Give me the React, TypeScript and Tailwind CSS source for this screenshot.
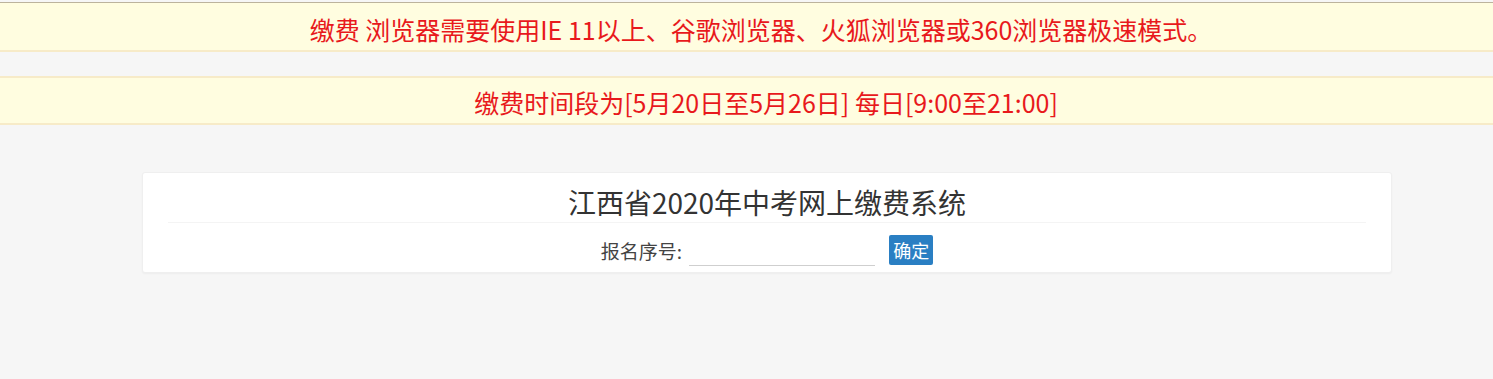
import React from "react";

export default function App() {
  return (
    <div
      className="min-h-[379px] bg-[#f6f6f6] pt-[2px]"
      style={{ fontFamily: '"Noto Sans CJK SC", "Noto Sans", sans-serif' }}
    >
      <div className="box-border flex h-[50px] items-center justify-center border-t border-b-2 border-t-[#bcb39d] border-b-[#f7ebc8] bg-[#fffde0] pl-[29px] pt-[6px] text-[25px] leading-none text-[#e8191c]">
        缴费 浏览器需要使用IE 11以上、谷歌浏览器、火狐浏览器或360浏览器极速模式。
      </div>
      <div className="mt-[24px] box-border flex h-[49px] items-center justify-center border-y-2 border-[#f7ebc8] bg-[#fffde0] pl-[39px] pt-[4px] text-[25px] leading-none text-[#e8191c]">
        缴费时间段为[5月20日至5月26日] 每日[9:00至21:00]
      </div>
      <div className="ml-[142px] mt-[47px] box-border h-[101px] w-[1250px] rounded-[3px] border border-[#efefef] bg-white pt-[9px] shadow-[0_1px_2px_rgba(0,0,0,0.04)]">
        <h3 className="text-center text-[28px] leading-[40px] text-[#333]">
          江西省2020年中考网上缴费系统
        </h3>
        <div className="mx-[25px] border-t border-[#f4f4f4]" />
        <div className="mt-[11px] flex items-center justify-center">
          <span className="text-[19px] leading-none text-[#444]">报名序号:</span>
          <input
            className="ml-[7px] mt-[8px] h-[24px] w-[186px] border-b border-[#cfcfcf] bg-transparent outline-none"
            type="text"
          />
          <button className="ml-[14px] h-[30px] rounded-[2px] bg-[#2a7fc3] px-[4px] text-[18px] leading-none text-white">
            确定
          </button>
        </div>
      </div>
    </div>
  );
}
